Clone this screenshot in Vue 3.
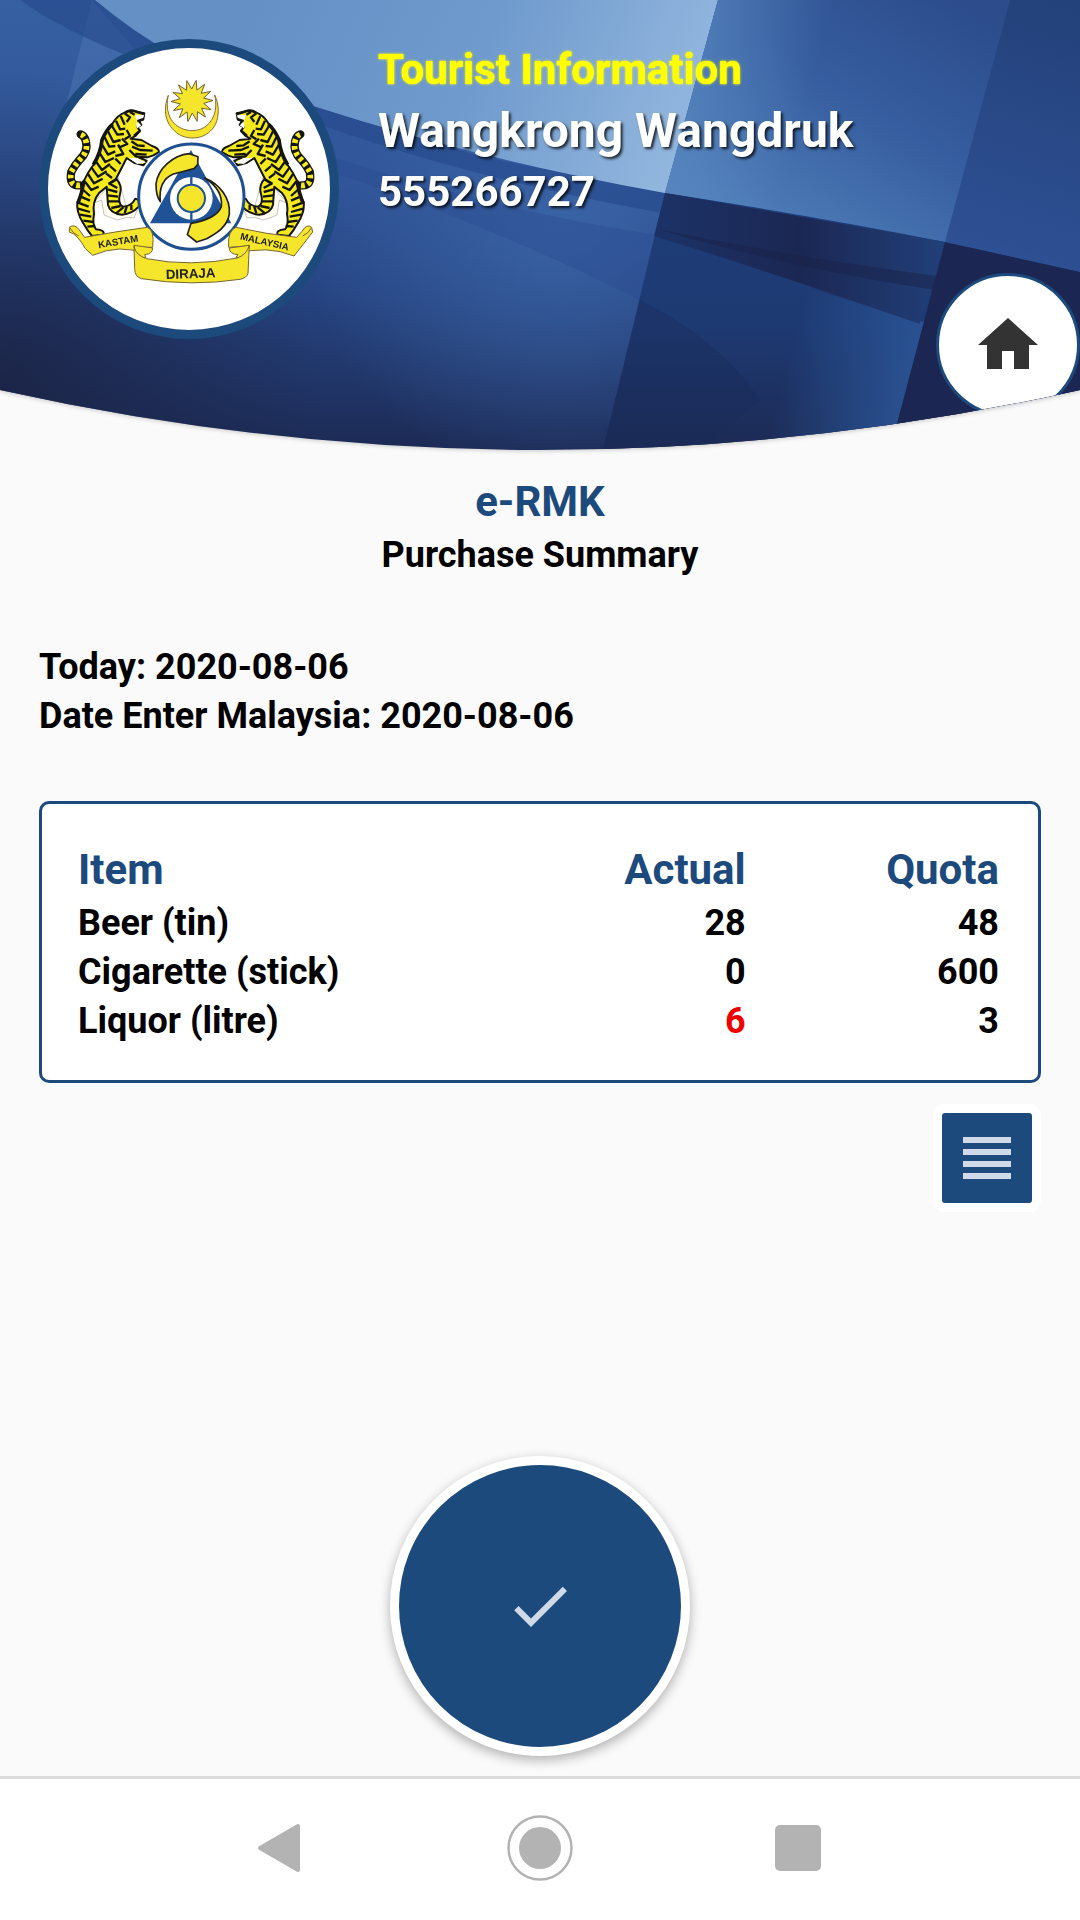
<script setup>
import { ref } from 'vue';

const tourist = ref({ name: 'Wangkrong Wangdruk', passport: '555266727' });
const today = ref('2020-08-06');
const dateEnter = ref('2020-08-06');

const items = ref([
  { label: 'Beer (tin)', actual: 28, quota: 48 },
  { label: 'Cigarette (stick)', actual: 0, quota: 600 },
  { label: 'Liquor (litre)', actual: 6, quota: 3 },
]);

// points of the star above the crest
const star = Array.from({ length: 28 }, (_, i) => {
  const r = i % 2 ? 36 : 63;
  const a = (i * Math.PI) / 14 - Math.PI / 2 + 0.2;
  return `${(486 + r * Math.cos(a)).toFixed(1)},${(213 + r * Math.sin(a)).toFixed(1)}`;
}).join(' ');
</script>

<template>
  <div class="screen">
    <div class="header-shadow">
      <header class="header">
        <svg class="backdrop" viewBox="0 0 1080 450" preserveAspectRatio="none" aria-hidden="true">
          <defs>
            <clipPath id="curve" clipPathUnits="objectBoundingBox">
              <path d="M0 0H1V0.8667Q0.5 1.1333 0 0.8667Z" />
            </clipPath>
            <linearGradient id="base" x1="0" y1="0" x2="0" y2="1">
              <stop offset="0" stop-color="#3660a2" />
              <stop offset="0.4" stop-color="#2f5397" />
              <stop offset="0.65" stop-color="#264482" />
              <stop offset="1" stop-color="#1c2a54" />
            </linearGradient>
            <radialGradient id="glow" gradientUnits="userSpaceOnUse" cx="560" cy="220" r="260">
              <stop offset="0" stop-color="#3d68aa" stop-opacity="0.8" />
              <stop offset="1" stop-color="#3d68aa" stop-opacity="0" />
            </radialGradient>
            <radialGradient id="corner" gradientUnits="userSpaceOnUse" cx="0" cy="390" r="320">
              <stop offset="0" stop-color="#1b2344" stop-opacity="0.9" />
              <stop offset="1" stop-color="#1b2344" stop-opacity="0" />
            </radialGradient>
            <linearGradient id="sky" gradientUnits="userSpaceOnUse" x1="250" y1="0" x2="680" y2="180">
              <stop offset="0" stop-color="#6590c6" />
              <stop offset="0.5" stop-color="#6f9acd" />
              <stop offset="1" stop-color="#94b8df" />
            </linearGradient>
            <linearGradient id="mid" gradientUnits="userSpaceOnUse" x1="960" y1="0" x2="800" y2="260">
              <stop offset="0" stop-color="#2c4c8c" />
              <stop offset="0.45" stop-color="#365d9f" />
              <stop offset="1" stop-color="#507fba" />
            </linearGradient>
            <linearGradient id="mid-left" gradientUnits="userSpaceOnUse" x1="680" y1="100" x2="800" y2="130">
              <stop offset="0" stop-color="#5887c0" stop-opacity="0.7" />
              <stop offset="1" stop-color="#5887c0" stop-opacity="0" />
            </linearGradient>
            <linearGradient id="right" gradientUnits="userSpaceOnUse" x1="1060" y1="0" x2="980" y2="250">
              <stop offset="0" stop-color="#23417a" />
              <stop offset="1" stop-color="#2e5094" />
            </linearGradient>
            <linearGradient id="low" gradientUnits="userSpaceOnUse" x1="0" y1="200" x2="0" y2="450">
              <stop offset="0" stop-color="#1e3d78" />
              <stop offset="0.5" stop-color="#1e3a73" />
              <stop offset="1" stop-color="#1c2a54" />
            </linearGradient>
            <linearGradient id="beam" gradientUnits="userSpaceOnUse" x1="790" y1="350" x2="915" y2="382">
              <stop offset="0" stop-color="#2c5ca0" stop-opacity="0" />
              <stop offset="1" stop-color="#2c5799" stop-opacity="0.85" />
            </linearGradient>
            <linearGradient id="band" gradientUnits="userSpaceOnUse" x1="660" y1="0" x2="940" y2="0">
              <stop offset="0" stop-color="#1c3266" />
              <stop offset="0.5" stop-color="#1b2753" />
              <stop offset="1" stop-color="#213f78" />
            </linearGradient>
          </defs>
          <rect width="1080" height="450" fill="url(#base)" />
          <rect width="1080" height="450" fill="url(#glow)" />
          <rect width="1080" height="450" fill="url(#corner)" />
          <path d="M92 0L60 130L170 90Z" fill="#5f88c2" opacity="0.3" />
          <path d="M20 0H95Q210 70 310 100L475 155L665 193L662 213Q420 170 230 90Q90 50 20 0Z" fill="#24478a" opacity="0.6" />
          <path d="M310 150Q500 212 657 235L640 300Q480 220 310 165Z" fill="#2a4c90" opacity="0.4" />
          <path d="M95 0H718L665 193Q480 160 310 105Q190 80 95 0Z" fill="url(#sky)" />
          <path d="M718 0H1080V272Q920 236 665 193Z" fill="url(#mid)" />
          <path d="M718 0H860V225L665 193Z" fill="url(#mid-left)" />
          <path d="M665 193Q820 217 945 242L1080 272V450H603Z" fill="url(#low)" />
          <path d="M640 300Q720 340 760 400L700 450H603Z" fill="#1b2b58" opacity="0.35" />
          <path d="M780 280L932 324L890 450H700Z" fill="url(#beam)" />
          <path d="M665 193L945 242L920 324Q780 275 654 236Z" fill="url(#band)" />
          <path d="M657 229Q800 258 937 276L935 290Q790 268 657 229Z" fill="#1a2148" opacity="0.5" />
          <path d="M1010 0H1080V272L945 242Z" fill="url(#right)" />
          <path d="M945 242L1080 272V450H890Z" fill="#1b2752" />
        </svg>

        <div class="avatar">
          <svg viewBox="54 54 846 846" role="img" aria-label="Kastam Diraja Malaysia">
            <defs>
              <g id="tiger">
                <path
                  d="M150 466Q115 470 124 425Q135 405 150 388Q175 365 168 335Q165 318 152 313"
                  fill="none" stroke="#15150f" stroke-width="25" stroke-linecap="round"
                />
                <path
                  d="M150 466Q115 470 124 425Q135 405 150 388Q175 365 168 335Q165 318 152 313"
                  fill="none" stroke="#f5ea1e" stroke-width="17" stroke-dasharray="11 9"
                />
                <!-- pale belly fringe -->
                <path
                  d="M258 420L235 470L190 520L215 510L222 555L240 562L262 570L290 562L312 564L325 530L290 534Z"
                  fill="#fffef2" stroke="#a9a8a0" stroke-width="2"
                />
                <path
                  d="M248 280Q262 256 284 248Q300 236 322 246L343 250L340 268L326 270L334 285L322 292L330 302L316 318L302 326
                     L334 330Q352 340 366 348Q386 354 387 366L370 376L352 382L318 380L350 392L340 406L312 398L290 384
                     Q276 412 258 446Q278 466 270 492Q262 520 278 530Q304 530 316 506Q332 508 326 530Q306 552 276 554
                     Q240 550 234 524L230 470L208 488Q186 514 192 552Q186 584 198 598Q226 600 220 614L186 618
                     Q172 602 160 580Q138 546 142 516Q158 490 162 452Q174 426 192 402Q214 368 216 330Q232 302 248 280Z"
                  fill="#f5ea1e" stroke="#15150f" stroke-width="6" stroke-linejoin="round"
                />
                <path d="M316 256L343 254L338 268L320 272ZM320 274L334 286L320 296ZM296 384L322 384L348 398L322 402Z" fill="#fff" />
                <path
                  d="M284 250L300 262L290 276M300 246L314 254M272 258L284 284M258 272L270 298L286 296M246 288L262 314L282 312
                     M234 304L250 336L272 330M224 322L238 350L256 348M216 344L234 374L256 364M208 368L226 396L252 384
                     M196 392L216 420L240 402M184 412L204 440L230 424M174 432L192 460L218 446M164 454L184 480L206 470
                     M160 480L180 498M152 500L180 512M144 518L176 530M144 536L180 546M150 554L184 560M160 572L190 576M172 590L196 588
                     M290 300L300 318L284 328M276 326L292 342L268 352M264 344L280 372L256 378M256 386L272 402M240 408L258 424
                     M228 430L246 444M304 334L322 346L344 348M306 350L330 360L368 362M316 372L350 374M298 360L318 380
                     M236 460L262 474M232 478L262 486M232 496L264 500M234 514L268 514M244 534L272 528M258 550L280 532M284 550L290 530M304 540L304 524"
                  fill="none" stroke="#15150f" stroke-width="7" stroke-linejoin="round"
                />
                <path d="M248 282Q228 300 216 330Q212 370 190 404M162 452Q156 490 144 520" fill="none" stroke="#15150f" stroke-width="11" />
                <path d="M284 250Q300 236 322 246L342 252M322 274L340 268M312 318L330 302M262 446L236 462" fill="none" stroke="#15150f" stroke-width="8" />
              </g>
            </defs>

            <path
              d="M415 196C398 240 404 286 448 314C486 334 534 324 556 284C568 258 568 222 554 195C564 238 552 278 516 296C480 310 438 298 420 262C410 240 410 216 415 196Z"
              fill="#f5e62b" stroke="#8a6d3a" stroke-width="3"
            />
            <polygon :points="star" fill="#f5e62b" stroke="#6f6030" stroke-width="3" />

            <use href="#tiger" />
            <use href="#tiger" transform="translate(963 0) scale(-1 1)" />

            <circle cx="484" cy="500" r="158" fill="#fff" stroke="#1f4f8f" stroke-width="9" />
            <path d="M483 360L604 580H360Z" fill="#1f5296" />
            <circle cx="484" cy="505" r="64" fill="#fff" />
            <path d="M484 425V580" stroke="#1f5296" stroke-width="7" />
            <circle cx="484" cy="505" r="41" fill="#f5e62b" stroke="#1f5296" stroke-width="6" />
            <path
              d="M504 380L478 371C428 376 384 416 378 462C378 486 382 504 391 515C386 468 402 444 430 432C450 426 470 422 492 416L503 404Z"
              fill="#f5e62b" stroke="#22221c" stroke-width="5" stroke-linejoin="round"
            />
            <path
              d="M524 444C570 462 602 506 598 552C592 590 560 610 530 626L500 636L472 614L483 580C530 572 564 556 574 530C578 494 556 464 524 444Z"
              fill="#f5e62b" stroke="#22221c" stroke-width="5" stroke-linejoin="round"
            />

            <g fill="#f5e62b" stroke="#75652f" stroke-width="3" stroke-linejoin="round">
              <path d="M118 592Q134 580 148 600L164 622Q260 604 352 592Q374 600 368 652L316 652Q318 668 348 672Q270 640 188 676L166 656Q142 612 118 606Z" />
              <path d="M312 646L368 654Q368 672 344 674L348 682L318 684Z" />
              <path d="M845 592Q830 580 816 604L800 622Q706 612 618 592Q592 602 596 652L650 648Q644 666 618 672Q710 644 792 678Q822 640 848 606Z" />
              <path d="M658 646L598 654Q598 672 624 674L618 682L648 684Z" />
              <path d="M312 650Q318 676 350 686Q482 712 622 684Q650 674 658 646L654 730Q650 744 630 748Q484 770 334 746Q314 740 314 716Z" />
              <path d="M120 594Q128 610 146 618M844 594Q836 610 818 618" fill="none" />
            </g>
            <g class="ribbon-text">
              <text x="206" y="655" transform="rotate(-10 206 655)">KASTAM</text>
              <text x="629" y="628" transform="rotate(13 629 628)">MALAYSIA</text>
              <text class="large" x="408" y="747" transform="rotate(-2 408 747)">DIRAJA</text>
            </g>
          </svg>
        </div>

        <div class="tourist">
          <h1 class="tourist-title">Tourist Information</h1>
          <p class="tourist-name">{{ tourist.name }}</p>
          <p class="tourist-passport">{{ tourist.passport }}</p>
        </div>

        <button class="home" type="button" aria-label="Home">
          <svg viewBox="0 0 24 24"><path d="M10 20v-6h4v6h5v-8h3L12 3 2 12h3v8z" fill="#333" /></svg>
        </button>
      </header>
    </div>

    <main class="content">
      <div class="titles">
        <h2>e-RMK</h2>
        <p>Purchase Summary</p>
      </div>

      <div class="dates">
        <p>Today: {{ today }}</p>
        <p>Date Enter Malaysia: {{ dateEnter }}</p>
      </div>

      <div class="card">
        <table>
          <thead>
            <tr>
              <th scope="col">Item</th>
              <th scope="col">Actual</th>
              <th scope="col">Quota</th>
            </tr>
          </thead>
          <tbody>
            <tr v-for="item in items" :key="item.label">
              <td>{{ item.label }}</td>
              <td :class="{ over: item.actual > item.quota }">{{ item.actual }}</td>
              <td>{{ item.quota }}</td>
            </tr>
          </tbody>
        </table>
      </div>

      <button class="list-button" type="button" aria-label="Purchase list">
        <svg viewBox="0 0 24 24">
          <path d="M4 15h16v-2H4v2zm0 4h16v-2H4v2zm0-8h16V9H4v2zm0-6v2h16V5H4z" fill="#d0dae8" />
        </svg>
      </button>

      <button class="confirm" type="button" aria-label="Confirm">
        <svg viewBox="0 0 24 24">
          <path d="M9 16.17L4.83 12l-1.42 1.41L9 19 21 7l-1.41-1.41z" fill="#d0dae8" />
        </svg>
      </button>
    </main>

    <nav class="navbar">
      <button type="button" aria-label="Back">
        <svg viewBox="0 0 66 66">
          <path d="M13 33L51 11V55Z" fill="#b3b3b3" stroke="#b3b3b3" stroke-width="4" stroke-linejoin="round" />
        </svg>
      </button>
      <button type="button" aria-label="Home screen">
        <svg viewBox="0 0 66 66">
          <circle cx="33" cy="33" r="31.5" fill="none" stroke="#b3b3b3" stroke-width="2.5" />
          <circle cx="33" cy="33" r="21" fill="#b3b3b3" />
        </svg>
      </button>
      <button type="button" aria-label="Recent apps">
        <svg viewBox="0 0 66 66"><rect x="8" y="10" width="46" height="46" rx="5" fill="#b3b3b3" /></svg>
      </button>
    </nav>
  </div>
</template>

<style>
body {
  background: #fafafa;
}
</style>

<style scoped>
.screen {
  min-height: 100vh;
  display: flex;
  flex-direction: column;
  font-family: Roboto, sans-serif;
  font-size: 36px;
  font-weight: 700;
  line-height: 49px;
  color: #000;
}

h1, h2, p {
  margin: 0;
}

button {
  padding: 0;
  border: none;
  background: none;
  display: flex;
  align-items: center;
  justify-content: center;
  cursor: pointer;
}

.header-shadow {
  filter: drop-shadow(0 1px 2px rgba(0, 0, 0, 0.2));
}

.header {
  position: relative;
  min-height: 450px;
  padding: 39px;
  box-sizing: border-box;
  display: flex;
  align-items: flex-start;
  gap: 39px;
  clip-path: url(#curve);
}

.backdrop {
  position: absolute;
  top: 0; left: 0; width: 100%; height: 100%;
}

.avatar {
  position: relative;
  flex: none;
  width: 282px; height: 282px;
  border: 9px solid #1c4a7d;
  border-radius: 50%;
  background: white;
}

.avatar svg {
  display: block;
  width: 100%; height: 100%;
}

.ribbon-text {
  font-family: "Liberation Sans", sans-serif;
  font-size: 29px;
  font-weight: bold;
  fill: #22221c;
}

.ribbon-text .large {
  font-size: 40px;
}

.tourist {
  position: relative;
  font-size: 42px;
  line-height: 61px;
  color: white;
  text-shadow: 2px 2px 3px rgba(0, 0, 0, 0.8);
}

.tourist-title {
  font-size: 42px;
  color: #ffff00;
  text-shadow: 0 0 3px #ffff00, 0 0 1px #ffff00;
}

.tourist-name {
  font-size: 48px;
}

.home {
  position: absolute;
  top: 273px; right: 0;
  width: 144px; height: 144px;
  border: 3px solid #1c4a7d;
  border-radius: 50%;
  background: white;
}

.home svg, .list-button svg, .confirm svg {
  width: 72px; height: 72px;
}

.content {
  flex: 1;
  padding: 23px 39px 20px;
  display: flex;
  flex-direction: column;
}

.titles {
  text-align: center;
  margin-bottom: 63px;
}

.titles h2 {
  font-size: 42px;
  line-height: 58px;
  color: #1c4a7d;
}

.dates {
  margin-bottom: 60px;
}

.card {
  padding: 37px 39px 34px 36px;
  border: 3px solid #1c4a7d;
  border-radius: 10px;
  background: white;
}

table {
  width: 100%;
  border-collapse: collapse;
  table-layout: fixed;
}

th, td {
  padding: 0;
  text-align: right;
}

th {
  font-size: 42px;
  line-height: 58px;
  color: #1c4a7d;
}

th:first-child, td:first-child {
  width: 45%;
  text-align: left;
}

.over {
  color: #f00000;
}

.list-button {
  align-self: flex-end;
  margin-top: 21px;
  width: 108px; height: 108px;
  border: 9px solid white;
  border-radius: 12px;
  background: #1c4a7d;
}

.confirm {
  align-self: center;
  margin-top: auto;
  width: 300px; height: 300px;
  border: 9px solid white;
  border-radius: 50%;
  background: #1c4a7d;
  box-shadow: 0 4px 12px rgba(0, 0, 0, 0.3);
}

.navbar {
  padding: 36px 150px 39px;
  border-top: 3px solid #dcdcdc;
  background: white;
  display: flex;
}

.navbar button {
  flex: 1;
}

.navbar svg {
  width: 66px; height: 66px;
}
</style>
